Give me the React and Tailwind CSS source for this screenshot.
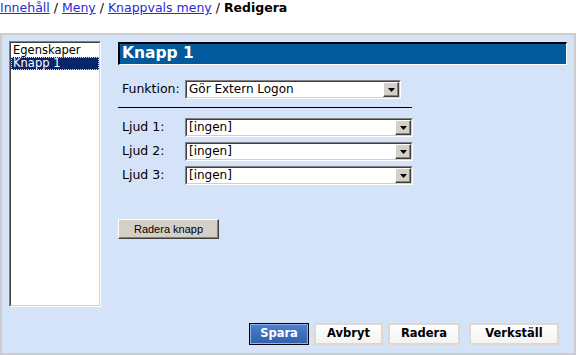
import React from "react";

function Arrow() {
  return (
    <div className="flex h-[15px] w-[16px] items-center justify-center border border-t-white border-l-white border-b-[#404040] border-r-[#404040] bg-[#d4d0c8] shadow-[inset_-1px_-1px_0_#808080]">
      <svg width="7" height="4" viewBox="0 0 7 4"><path d="M0 0h7L3.5 4z" fill="#000" /></svg>
    </div>
  );
}

function Select({ value, w }) {
  return (
    <div className={`${w} h-[19px] border border-t-[#808080] border-l-[#808080] border-b-white border-r-white`}>
      <div className="flex h-full items-center border border-t-[#404040] border-l-[#404040] border-b-[#d4d0c8] border-r-[#d4d0c8] bg-white">
        <span className="flex-1 pl-[2px] text-[12px] leading-[15px] text-black">{value}</span>
        <Arrow />
      </div>
    </div>
  );
}

export default function App() {
  const font = { fontFamily: '"DejaVu Sans", Verdana, sans-serif' };
  return (
    <div className="w-[577px] h-[355px] bg-white" style={font}>
      <div className="h-[33px] text-[12.5px] leading-[14px] pt-[1px] text-black">
        <a className="text-[#2b2bd0] underline">Innehåll</a> / <a className="text-[#2b2bd0] underline">Meny</a> /{" "}
        <a className="text-[#2b2bd0] underline">Knappvals meny</a> / <b>Redigera</b>
      </div>
      <div className="w-[576px] h-[322px] border-2 border-[#cccccc] bg-[#d4e3f8] flex flex-col pt-[6px] pl-[7px] pr-[15px] pb-[8px]">
        <div className="flex h-[266px]">
          <div className="w-[92px] h-[266px] border border-t-[#808080] border-l-[#808080] border-b-white border-r-white">
            <div className="h-full border border-t-[#404040] border-l-[#404040] border-b-[#d4d0c8] border-r-[#d4d0c8] bg-white text-[11.5px] leading-[13px] pt-[1px]">
              <div className="pl-[2px] h-[13px] text-black">Egenskaper</div>
              <div className="h-[13px] bg-[#0a246a] text-white pl-[1px] border border-dotted border-[#f0e68c] leading-[11px]">Knapp 1</div>
            </div>
          </div>
          <div className="ml-[17px] mt-[1px] flex-1 mr-[-8px] flex flex-col">
            <div className="h-[23px] border-t-2 border-l-2 border-t-black border-l-black border-b border-r border-b-white border-r-white bg-[#005a9c] text-white font-bold text-[15.5px] leading-[19px] pl-[2px]">
              Knapp 1
            </div>
            <div className="flex items-center mt-[15px] pl-[4px]">
              <span className="w-[63px] text-[12.5px] text-black">Funktion:</span>
              <Select value="Gör Extern Logon" w="w-[216px]" />
            </div>
            <div className="w-[294px] h-[1px] bg-black mt-[8px]" />
            <div className="flex flex-col gap-[5px] mt-[10px] pl-[4px]">
              {["Ljud 1:", "Ljud 2:", "Ljud 3:"].map((l) => (
                <div key={l} className="flex items-center">
                  <span className="w-[63px] text-[12.5px] text-black">{l}</span>
                  <Select value="[ingen]" w="w-[228px]" />
                </div>
              ))}
            </div>
            <div className="mt-[31px]">
              <button
                className="w-[101px] h-[20px] bg-[#d4d0c8] border border-t-white border-l-white border-b-[#404040] border-r-[#404040] shadow-[inset_-1px_-1px_0_#808080] text-[11px] text-black"
                style={{ fontFamily: '"Liberation Sans", Arial, sans-serif' }}
              >
                Radera knapp
              </button>
            </div>
          </div>
        </div>
        <div className="flex justify-end mt-[16px] h-[22px] text-[11.5px] font-bold">
          <button className="w-[60px] h-[22px] border border-black bg-gradient-to-b from-[#4d7fcc] to-[#2f60ad] text-white shadow-[inset_0_0_0_1px_#8fb3e8]">Spara</button>
          <button className="ml-[5px] w-[69px] h-[22px] border-2 border-[#ddd9cf] bg-gradient-to-b from-white to-[#f3f3f3] text-black">Avbryt</button>
          <button className="ml-[5px] w-[72px] h-[22px] border-2 border-[#ddd9cf] bg-gradient-to-b from-white to-[#f3f3f3] text-black">Radera</button>
          <button className="ml-[9px] w-[90px] h-[22px] border-2 border-[#ddd9cf] bg-gradient-to-b from-white to-[#f3f3f3] text-black">Verkställ</button>
        </div>
      </div>
    </div>
  );
}
